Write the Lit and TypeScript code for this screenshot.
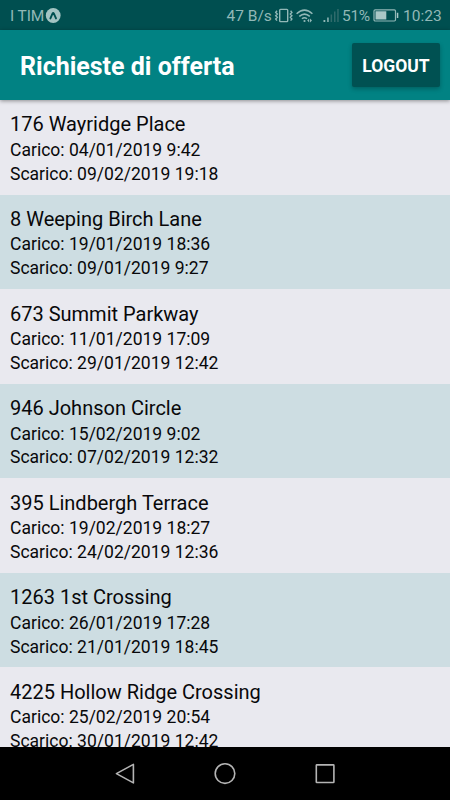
import { LitElement, html, css } from "lit";
import { customElement } from "lit/decorators.js";

interface Offer {
  place: string;
  load: string;
  unload: string;
}

const offers: Offer[] = [
  { place: "176 Wayridge Place", load: "04/01/2019 9:42", unload: "09/02/2019 19:18" },
  { place: "8 Weeping Birch Lane", load: "19/01/2019 18:36", unload: "09/01/2019 9:27" },
  { place: "673 Summit Parkway", load: "11/01/2019 17:09", unload: "29/01/2019 12:42" },
  { place: "946 Johnson Circle", load: "15/02/2019 9:02", unload: "07/02/2019 12:32" },
  { place: "395 Lindbergh Terrace", load: "19/02/2019 18:27", unload: "24/02/2019 12:36" },
  { place: "1263 1st Crossing", load: "26/01/2019 17:28", unload: "21/01/2019 18:45" },
  { place: "4225 Hollow Ridge Crossing", load: "25/02/2019 20:54", unload: "30/01/2019 12:42" },
];

@customElement("status-bar")
class StatusBar extends LitElement {
  static styles = css`
    :host {
      display: flex;
      flex: none;
      align-items: center;
      height: 30px;
      box-sizing: border-box;
      padding: 2px 10px 0;
      background: #004f50;
      color: #92b8b7;
      font-size: 15.5px;
      white-space: nowrap;
    }
    svg { display: block; flex: none; }
    .carrier { width: 35px; }
    .speed { margin-left: auto; width: 47.5px; }
    .wifi { margin-left: 2px; }
    .signal { margin-left: 9px; }
    .percent { margin-left: 2px; width: 31px; letter-spacing: -0.3px; }
    .time { margin-left: 4px; width: 37px; }
    .carrier { letter-spacing: -0.1px; }
  `;
  render() {
    return html`
      <span class="carrier">I TIM</span>
      <svg width="17" height="16" viewBox="0 0 17 16">
        <circle cx="8.2" cy="7.5" r="7.4" fill="#a3c4c3" />
        <path d="M5.4 10.4 7.6 5.4Q8.2 4.4 8.8 5.4L11 10.4" fill="none" stroke="#004f50" stroke-width="1.9" stroke-linecap="round" />
      </svg>
      <span class="speed">47 B/s</span>
      <svg width="20" height="16" viewBox="0 0 20 16" fill="none" stroke="#92b8b7" stroke-width="1.4">
        <rect x="5.7" y="1.4" width="8" height="12.2" rx="0.8" />
        <path d="M3 2.8 1.7 4.4 3.3 6 1.7 7.7 3.3 9.3 1.7 11 3 12.6M16.6 2.8 17.9 4.4 16.3 6 17.9 7.7 16.3 9.3 17.9 11 16.6 12.6" />
      </svg>
      <svg class="wifi" width="18" height="16" viewBox="0 0 18 16" fill="none" stroke="#92b8b7" stroke-width="1.5">
        <path d="M0.6 5.8Q8.5-1.6 16.4 5.8M3.3 8.4Q8.5 3.8 13.8 8.4M5.9 10.8Q8.5 8.6 11 10.8" />
        <circle cx="8.5" cy="13" r="1.1" fill="#92b8b7" stroke="none" />
        <path d="M13.2 10.6 11.2 12.5 13.2 14.4ZM14 10.6 16 12.5 14 14.4Z" fill="#92b8b7" stroke="none" />
      </svg>
      <svg class="signal" width="17" height="16" viewBox="0 0 17 16">
        <path d="M0.5 12h1.8v2H0.5zM4.2 9.4h1.5V14H4.2z" fill="#92b8b7" />
        <path d="M7.6 6.6h1.5V14H7.6zM11 3.6h1.5V14H11zM14.2 1h1.5v13h-1.5z" fill="#2f6b6c" />
      </svg>
      <span class="percent">51%</span>
      <svg width="26" height="16" viewBox="0 0 26 16">
        <rect x="1" y="1.8" width="21.5" height="11.2" rx="1.2" fill="none" stroke="#92b8b7" stroke-width="1.2" />
        <path d="M2.5 3.3h10.8v8.2H2.5zM23.8 4.8h1.5v5.2h-1.5z" fill="#a9c8c7" />
      </svg>
      <span class="time">10:23</span>
    `;
  }
}

@customElement("app-header")
class AppHeader extends LitElement {
  static styles = css`
    :host {
      display: flex;
      flex: none;
      align-items: center;
      justify-content: space-between;
      height: 70px;
      box-sizing: border-box;
      padding: 0 10px 0 20px;
      background: #018283;
      color: #fff;
      z-index: 1;
      box-shadow: 0 1px 4px rgba(0, 0, 0, 0.4);
    }
    h1 { margin: 0; padding-top: 3px; font-size: 25px; line-height: 30px; font-weight: 700; white-space: nowrap; }
    button {
      width: 88px;
      height: 44px;
      padding: 2px 0 0;
      border: 0;
      border-radius: 2px;
      background: #005152;
      color: #fff;
      font: 700 17.5px Roboto, sans-serif;
      box-shadow: 0 2px 4px rgba(0, 0, 0, 0.25);
    }
  `;
  render() {
    return html`<h1>Richieste di offerta</h1><button>LOGOUT</button>`;
  }
}

@customElement("nav-bar")
class NavBar extends LitElement {
  static styles = css`
    :host {
      display: flex;
      flex: none;
      justify-content: center;
      gap: 76px;
      height: 53px;
      background: #000;
      align-items: center;
    }
    svg { fill: none; stroke: #b4b4b4; stroke-width: 1.6; stroke-linejoin: round; }
  `;
  render() {
    return html`
      <svg width="24" height="24" viewBox="0 0 24 24"><path d="M3.4 11.6 20.4 2.4V20.9Z" /></svg>
      <svg width="24" height="24" viewBox="0 0 24 24"><circle cx="12" cy="11.6" r="9.8" /></svg>
      <svg width="24" height="24" viewBox="0 0 24 24"><rect x="3.3" y="2.9" width="17.6" height="17.6" rx="0.6" /></svg>
    `;
  }
}

@customElement("app-root")
class AppRoot extends LitElement {
  static styles = css`
    :host {
      display: flex;
      flex-direction: column;
      width: 450px;
      height: 800px;
      overflow: hidden;
      font-family: Roboto, sans-serif;
    }
    .list { flex: 1; min-height: 0; overflow: hidden; background: #e9e9ef; }
    .row {
      height: 94.58px;
      box-sizing: border-box;
      padding: 11.4px 10px 0;
      background: #e9e9ef;
      color: #08080a;
      font-size: 17.55px;
      line-height: 23.8px;
      white-space: nowrap;
    }
    .row:nth-child(even) { background: #cddde2; }
    .place { margin-bottom: 1.5px; font-size: 20px; line-height: 26px; }
  `;
  render() {
    return html`
      <status-bar></status-bar>
      <app-header></app-header>
      <div class="list">
        ${offers.map(
          (o) => html`<div class="row">
            <div class="place">${o.place}</div>
            <div>Carico: ${o.load}</div>
            <div>Scarico: ${o.unload}</div>
          </div>`
        )}
      </div>
      <nav-bar></nav-bar>
    `;
  }
}
